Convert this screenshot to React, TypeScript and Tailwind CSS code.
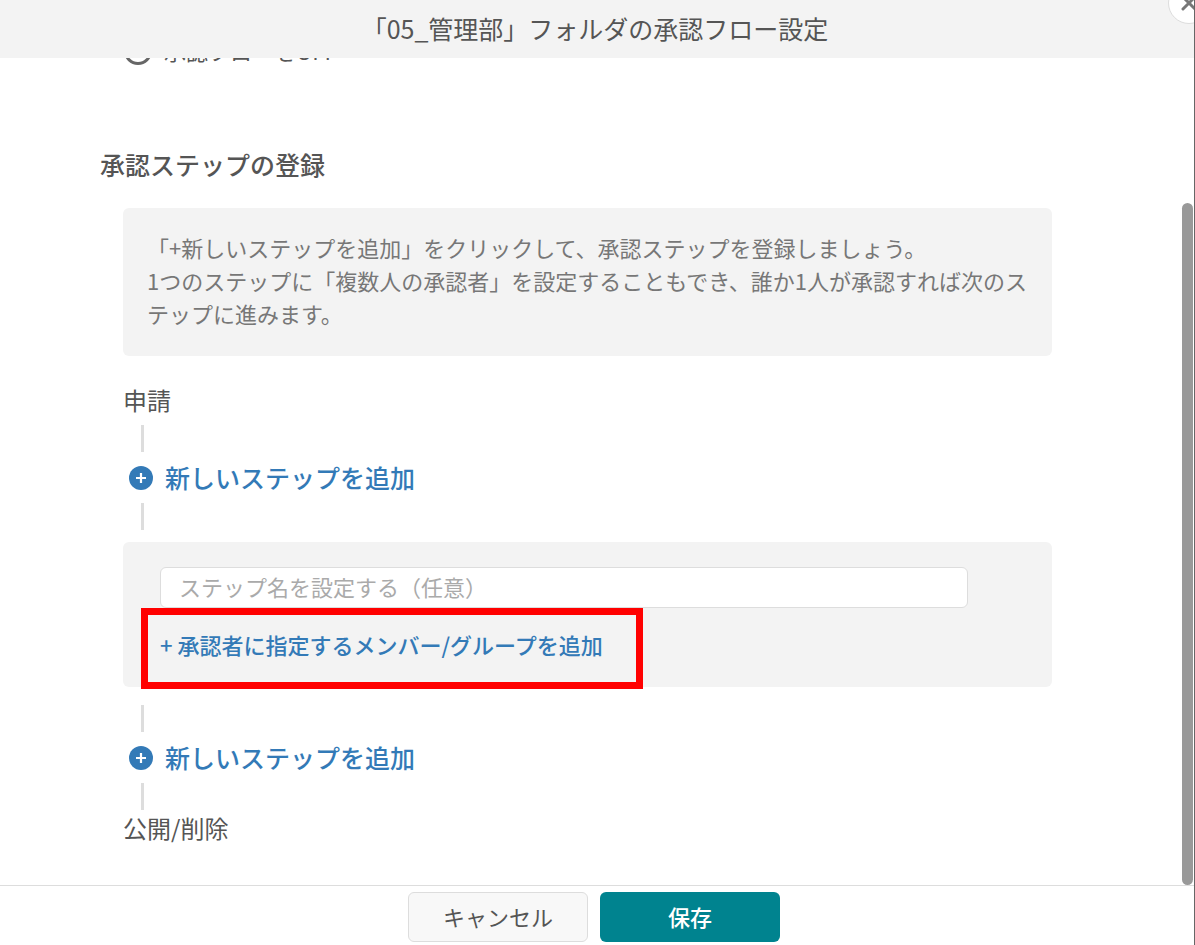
import { useState } from "react";

const Connector: React.FC = () => <div className="ml-[18px] h-[27px] w-[3px] bg-[#dddddd]" />;

const AddStepButton: React.FC = () => (
  <button type="button" className="ml-[6px] flex h-[51px] items-center gap-3 text-[25px] font-medium text-[#337ab7]">
    <svg viewBox="0 0 24 24" className="size-6" aria-hidden="true">
      <circle cx="12" cy="12" r="12" fill="#337ab7" />
      <path d="M12 7v10M7 12h10" stroke="#fff" strokeWidth="2.2" />
    </svg>
    新しいステップを追加
  </button>
);

interface StepCardProps {
  name: string;
  onChange: (name: string) => void;
}

const StepCard: React.FC<StepCardProps> = ({ name, onChange }) => (
  <div className="relative my-3 h-[145px] rounded-md bg-[#f3f3f3] pt-[25px] pr-[84px] pl-[37px]">
    <input
      type="text"
      aria-label="ステップ名"
      placeholder="ステップ名を設定する（任意）"
      value={name}
      onChange={(e) => onChange(e.target.value)}
      className="block h-[41px] w-full rounded-md border border-[#dddddd] bg-white px-[18px] pb-1 text-[22px] text-[#555555] placeholder:text-[#aaaaaa]"
    />
    <button type="button" className="mt-[18px] flex h-9 items-center text-[22px] font-medium text-[#337ab7]">
      + 承認者に指定するメンバー/グループを追加
    </button>
    <div className="pointer-events-none absolute top-[66px] left-[18px] h-[81px] w-[502px] border-[7px] border-[#ff0000]" />
  </div>
);

export default function App() {
  const [stepName, setStepName] = useState("");

  return (
    <div className="relative flex h-screen flex-col overflow-hidden border-r border-[#666666] bg-white font-['Noto_Sans_CJK_JP','Noto_Sans',sans-serif] text-[#555555]">
      <header className="flex h-[58px] shrink-0 items-center justify-center bg-[#f3f3f3] pr-1">
        <h1 className="text-[25px]">「05_管理部」フォルダの承認フロー設定</h1>
      </header>
      <button
        type="button"
        aria-label="閉じる"
        className="absolute -top-[18px] -right-4 flex size-[42px] items-center justify-center rounded-full border border-[#dddddd] bg-white"
      >
        <svg viewBox="0 0 16 16" className="size-4 shrink-0" aria-hidden="true">
          <path d="M2 2l12 12M14 2L2 14" stroke="#777777" strokeWidth="3" strokeLinecap="round" />
        </svg>
      </button>

      <div className="flex min-h-0 flex-1">
        {/* scrolled to the end, so the content hangs from the bottom edge */}
        <main className="flex flex-1 flex-col justify-end overflow-hidden pr-[130px] pl-[100px]">
          <label className="ml-6 flex h-7 shrink-0 items-start gap-3 text-[22px] leading-[26px]">
            <input type="radio" name="flow" className="size-7 appearance-none rounded-full border-[3px] border-[#666666]" />
            承認フローをOFF
          </label>
          <section className="mt-[82px] shrink-0 pb-[39px]">
            <h2 className="flex h-9 items-center text-[25px] font-medium">承認ステップの登録</h2>
            <div className="mt-[25px] ml-[23px]">
              <p className="rounded-md bg-[#f3f3f3] pt-[23px] pr-4 pb-[26px] pl-6 text-[22px] leading-[33px] text-[#777777]">
                「+新しいステップを追加」をクリックして、承認ステップを登録しましょう。
                <br />
                1つのステップに「複数人の承認者」を設定することもでき、誰か1人が承認すれば次のステップに進みます。
              </p>
              <div className="mt-[26px] mb-[7px] flex h-9 items-center text-[24px]">申請</div>
              <Connector />
              <AddStepButton />
              <Connector />
              <StepCard name={stepName} onChange={setStepName} />
              <div className="mt-[18px]">
                <Connector />
              </div>
              <AddStepButton />
              <Connector />
              <div className="flex h-9 items-center text-[24px]">公開/削除</div>
            </div>
          </section>
        </main>
        <div className="flex w-3 flex-col pr-px">
          <div className="flex-[7]" />
          <div className="flex-[33] rounded-full bg-[#999999]" />
        </div>
      </div>

      <footer className="flex shrink-0 justify-center gap-3 border-t border-[#dddddd] pt-[6px] pr-[6px] pb-[3px] text-[22px]">
        <button type="button" className="h-[50px] w-[180px] rounded-md border border-[#dddddd] bg-[#f8f8f8] pb-[2px]">
          キャンセル
        </button>
        <button type="button" className="h-[50px] w-[180px] rounded-md bg-[#00838f] pb-[2px] font-medium text-white">
          保存
        </button>
      </footer>
    </div>
  );
}
